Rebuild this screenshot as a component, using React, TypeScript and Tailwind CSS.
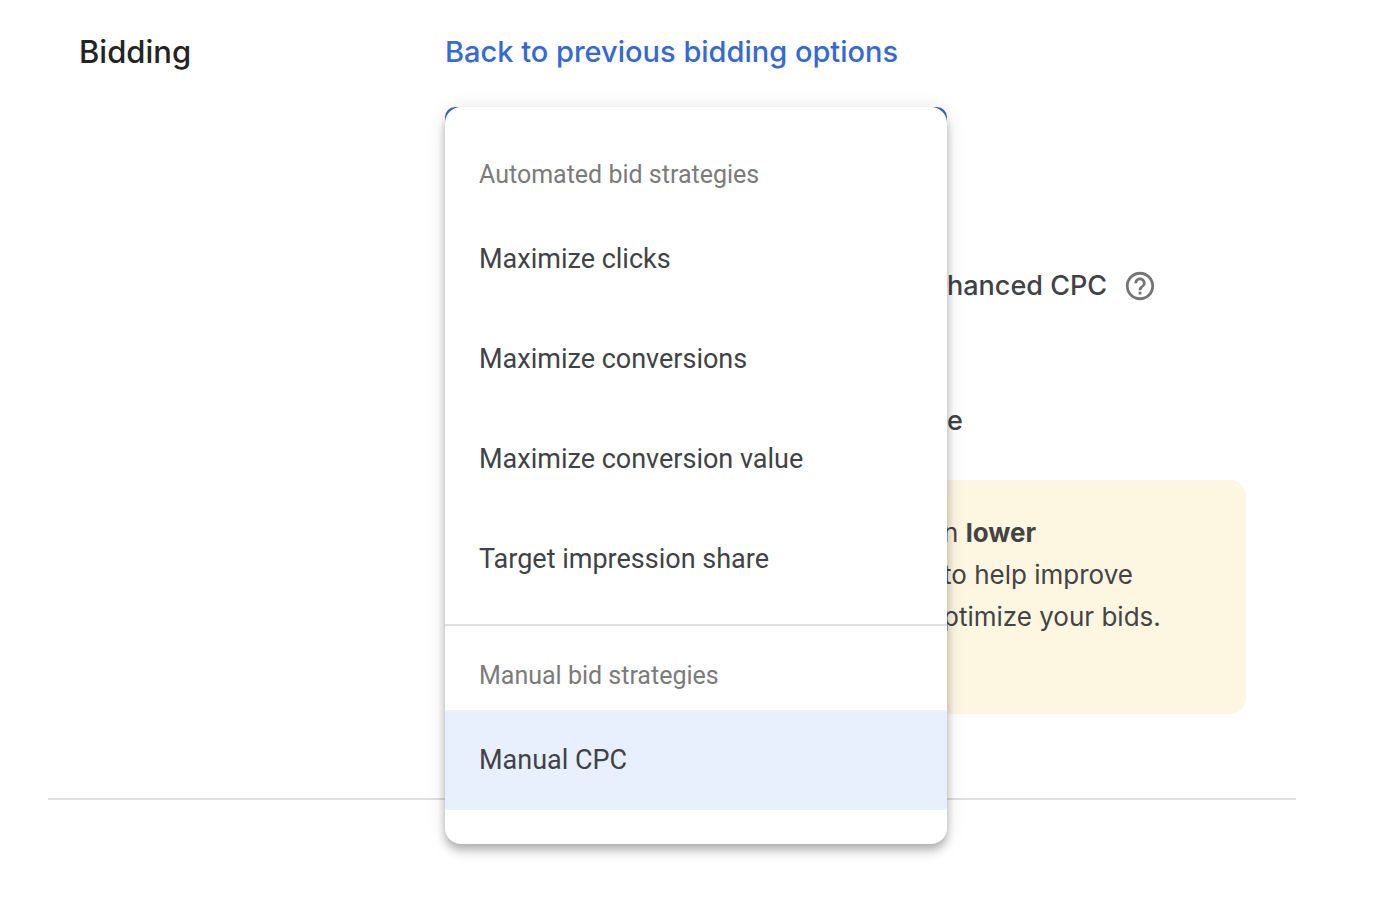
import React, { useState } from 'react';
import { MdHelpOutline } from 'react-icons/md';

interface StrategyGroup {
  title: string;
  options: string[];
}

const groups: StrategyGroup[] = [
  {
    title: 'Automated bid strategies',
    options: [
      'Maximize clicks',
      'Maximize conversions',
      'Maximize conversion value',
      'Target impression share',
    ],
  },
  {
    title: 'Manual bid strategies',
    options: ['Manual CPC'],
  },
];

interface StrategyMenuProps {
  selected: string;
  onSelect: (option: string) => void;
}

const StrategyMenu: React.FC<StrategyMenuProps> = ({ selected, onSelect }) => {
  return (
    <div
      role="listbox"
      aria-label="Bidding"
      className="absolute inset-x-0 top-0 z-10 bg-white rounded-2xl py-[34px] font-[Roboto,sans-serif] shadow-[0_4px_8px_-2px_rgba(0,0,0,0.2),0_8px_10px_0_rgba(0,0,0,0.14),0_2px_20px_0_rgba(0,0,0,0.12)]"
    >
      {groups.map((group, index) => (
        <div
          key={group.title}
          role="group"
          aria-label={group.title}
          className={index > 0 ? 'mt-[15px] pt-4 border-t-2 border-[#dfdfdf]' : ''}
        >
          <p className="h-[68px] px-[34px] flex items-center text-[25px] text-[#7b7b7b]">{group.title}</p>
          {group.options.map(option => (
            <button
              key={option}
              type="button"
              role="option"
              aria-selected={option === selected}
              onClick={() => onSelect(option)}
              className={`w-full h-[100px] px-[34px] flex items-center text-left text-[27px] text-[#3f4347] ${
                option === selected ? 'bg-[#e8effd]' : 'hover:bg-gray-50'
              }`}
            >
              {option}
            </button>
          ))}
        </div>
      ))}
    </div>
  );
};

const App: React.FC = () => {
  const [selected, setSelected] = useState('Manual CPC');

  return (
    <main className="min-h-screen bg-white pl-12 pr-20 font-[Inter,sans-serif] text-[#3f4347]">
      <section className="flex pt-8 pl-[31px] pb-[84px] border-b-2 border-[#dfdfdf]">
        <h2 className="w-[366px] shrink-0 text-[31px] leading-10 font-medium text-[#242424]">Bidding</h2>

        <div className="flex-1 max-w-[801px]">
          <a href="#" className="block text-[29px] leading-10 font-medium text-[#3569d3]">
            Back to previous bidding options
          </a>

          <div className="relative mt-[35px] w-[502px]">
            <button
              type="button"
              aria-label="Bidding"
              aria-haspopup="listbox"
              aria-expanded="true"
              className="block w-full h-[84px] rounded-[10px] border-4 border-[#3569d3]"
            />
            <StrategyMenu selected={selected} onSelect={setSelected} />
          </div>

          <div className="mt-[75px] pl-[502px] flex items-center gap-4 text-[27px] leading-10 font-medium">
            <span>hanced CPC</span>
            <button type="button" aria-label="Help" className="text-[#757575]">
              <MdHelpOutline size={34} />
            </button>
          </div>

          <p className="mt-[95px] pl-[502px] text-[27px] leading-10 font-medium">e</p>

          <div className="mt-[39px] rounded-2xl bg-[#fdf6e1] pt-8 pb-[76px] pl-[498px] text-[26px] leading-[42px] text-[#444444]">
            <p>
              n <strong className="font-bold">lower</strong>
            </p>
            <p>to help improve</p>
            <p>ptimize your bids.</p>
          </div>
        </div>
      </section>
    </main>
  );
};

export default App;
